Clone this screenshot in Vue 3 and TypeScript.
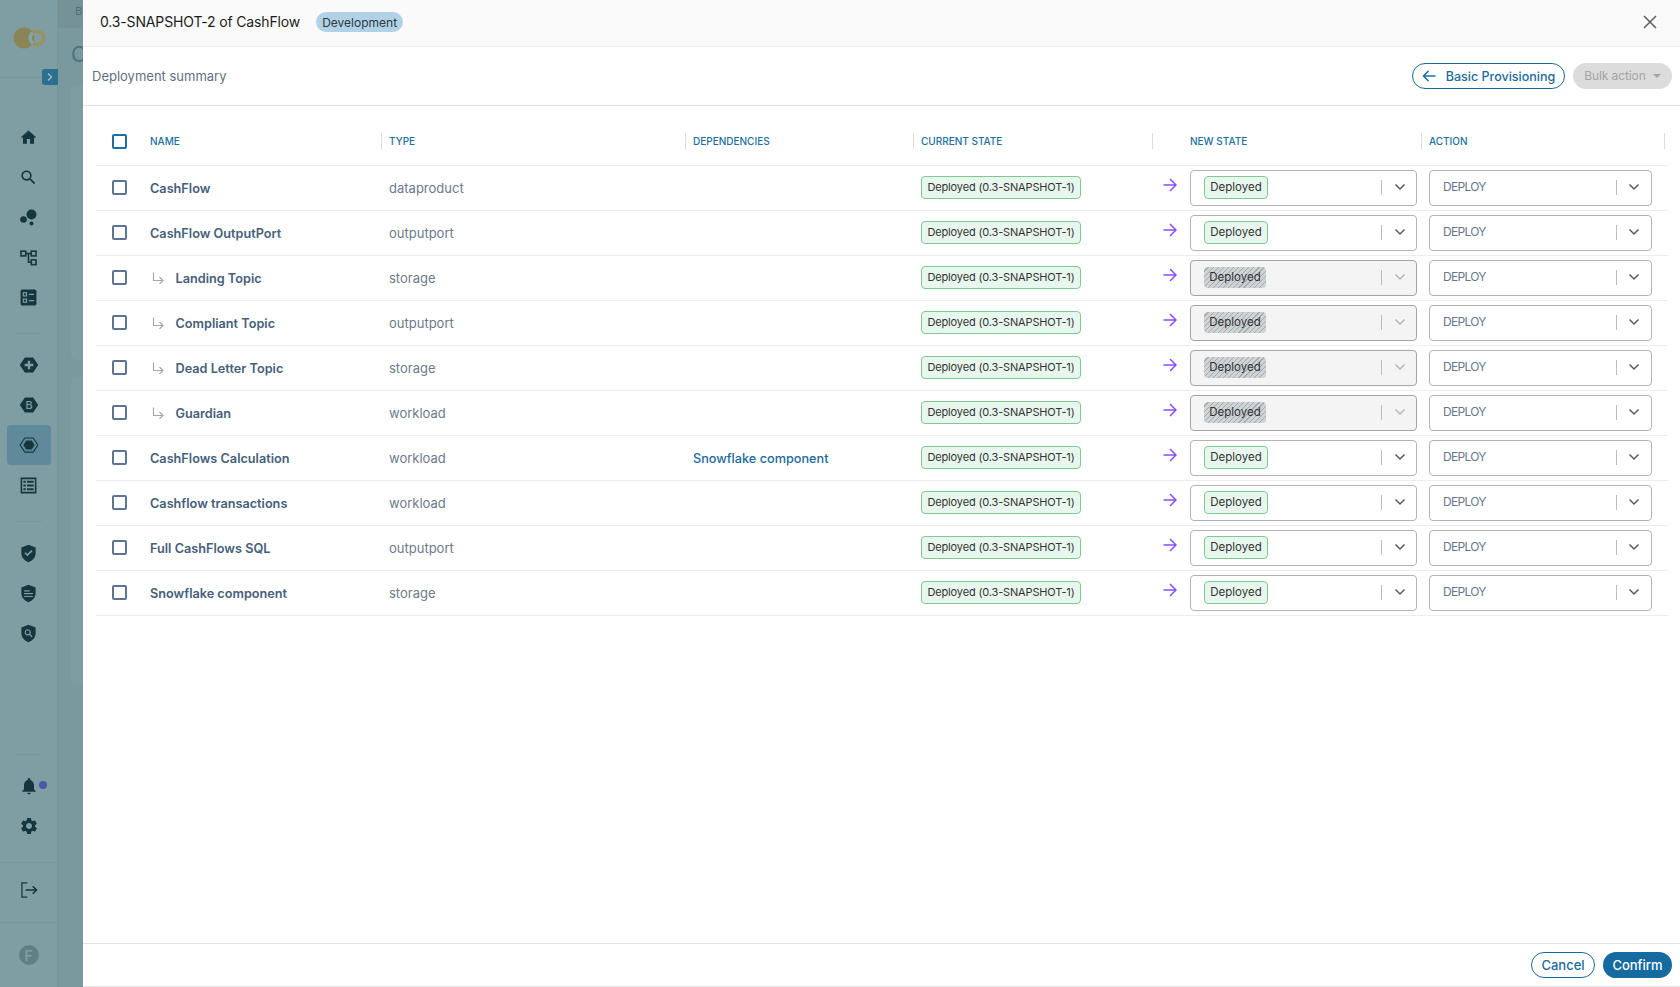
<script setup lang="ts">
interface Row { name: string; type: string; child?: boolean; dep?: string; locked?: boolean }
const rows: Row[] = [
  { name: 'CashFlow', type: 'dataproduct' },
  { name: 'CashFlow OutputPort', type: 'outputport' },
  { name: 'Landing Topic', type: 'storage', child: true, locked: true },
  { name: 'Compliant Topic', type: 'outputport', child: true, locked: true },
  { name: 'Dead Letter Topic', type: 'storage', child: true, locked: true },
  { name: 'Guardian', type: 'workload', child: true, locked: true },
  { name: 'CashFlows Calculation', type: 'workload', dep: 'Snowflake component' },
  { name: 'Cashflow transactions', type: 'workload' },
  { name: 'Full CashFlows SQL', type: 'outputport' },
  { name: 'Snowflake component', type: 'storage' },
]
const heads = ['NAME', 'TYPE', 'DEPENDENCIES', 'CURRENT STATE', '', 'NEW STATE', 'ACTION', '']
</script>

<template>
  <div class="page">
    <aside class="side">
      <div class="brand">
        <svg class="logo" viewBox="0 0 34 24" width="34" height="24">
          <defs><clipPath id="logo-clip"><circle cx="11" cy="12" r="10.500" /></clipPath></defs>
          <circle cx="11" cy="12" r="10.500" fill="#8b8456" />
          <circle cx="24" cy="12" r="6.800" fill="none" stroke="#9a9160" stroke-width="3.400" />
          <circle cx="24" cy="12" r="6.800" fill="none" stroke="#86a3a5" stroke-width="3.400" clip-path="url(#logo-clip)" />
        </svg>
        <span class="expand">
          <svg viewBox="0 0 16 16" width="16" height="16"><path d="M6 4.500 9.500 8 6 11.500" fill="none" stroke="#9cc0d0" stroke-width="1.300" /></svg>
        </span>
      </div>
      <nav class="group first">
        <a class="item"><svg viewBox="0 0 24 24" class="ic"><path d="M10 20v-6h4v6h5v-8h3L12 3 2 12h3v8z" /></svg></a>
        <a class="item"><svg viewBox="0 0 24 24" class="ic"><path d="M15.500 14h-.79l-.28-.27C15.410 12.590 16 11.110 16 9.500 16 5.910 13.090 3 9.500 3S3 5.910 3 9.500 5.910 16 9.500 16c1.610 0 3.090-.59 4.230-1.570l.27.28v.79l5 4.990L20.490 19l-4.990-5zm-6 0C7.010 14 5 11.990 5 9.500S7.010 5 9.500 5 14 7.010 14 9.500 11.990 14 9.500 14z" /></svg></a>
        <a class="item"><svg viewBox="0 0 24 24" class="ic"><circle cx="5.700" cy="14.500" r="4.200" /><circle cx="15.800" cy="8.200" r="6.300" /><circle cx="15.800" cy="19.600" r="2.500" /></svg></a>
        <a class="item"><svg viewBox="0 0 24 24" class="ic"><g fill="none" stroke="#16363d" stroke-width="2"><rect x="2.500" y="4" width="6" height="6" /><rect x="15.500" y="4" width="6" height="6" /><rect x="15.500" y="15" width="6" height="6" /><path d="M8.500 7h7M12 7v11h3.500" /></g></svg></a>
        <a class="item"><svg viewBox="0 0 24 24" class="ic"><rect x="2" y="2" width="20" height="20" rx="2" /><g fill="none" stroke="#7f9ea3" stroke-width="1.500"><rect x="5.500" y="6" width="4" height="4" /><rect x="5.500" y="14" width="4" height="4" /><path d="M12.500 8h6.500M12.500 16h6.500" /></g></svg></a>
      </nav>
      <div class="rule" />
      <nav class="group">
        <a class="item"><svg viewBox="0 0 24 24" class="ic big"><path fill-rule="evenodd" d="M7 3h10l6 9-6 9H7l-6-9zm3.600 3.800v3.800H6.800v2.800h3.800v3.800h2.800v-3.800h3.800v-2.800h-3.800V6.800z" /></svg></a>
        <a class="item"><svg viewBox="0 0 24 24" class="ic big"><path d="M7 3h10l6 9-6 9H7l-6-9z" /><text x="12" y="16.500" class="hex-b">B</text></svg></a>
        <a class="item active"><svg viewBox="0 0 24 24" class="ic big"><path d="M7 3.500h10l5.700 8.500L17 20.500H7L1.300 12z" fill="none" stroke="#16363d" stroke-width="1.300" /><path d="M8.700 6.500h6.600l3.400 5.500-3.400 5.500H8.700L5.300 12z" /></svg></a>
        <a class="item"><svg viewBox="0 0 24 24" class="ic"><path fill-rule="evenodd" d="M2 2h20v20H2zm2 2v16h16V4zm1.500 2h3v2.500h-3zm4.500 0h8.500v2.500H10zm-4.500 4.800h3v2.500h-3zm4.500 0h8.500v2.500H10zm-4.500 4.700h3V18h-3zm4.500 0h8.500V18H10z" /></svg></a>
      </nav>
      <div class="rule" />
      <nav class="group">
        <a class="item"><svg viewBox="0 0 24 24" class="ic"><path fill-rule="evenodd" d="M12 1 3 4.500v7c0 5.500 3.800 9.800 9 11.500 5.200-1.700 9-6 9-11.500v-7zm-1.400 14.500-3.800-3.800 1.500-1.400 2.300 2.300 5-5 1.500 1.400z" /></svg></a>
        <a class="item"><svg viewBox="0 0 24 24" class="ic"><path fill-rule="evenodd" d="M12 1 3 4.500v7c0 5.500 3.800 9.800 9 11.500 5.200-1.700 9-6 9-11.500v-7zM6.500 8h7v1.500h-7zm0 3.500h11V13h-11zm0 3.500h11v1.500h-11z" /></svg></a>
        <a class="item"><svg viewBox="0 0 24 24" class="ic"><path fill-rule="evenodd" d="M12 1 3 4.500v7c0 5.500 3.800 9.800 9 11.500 5.200-1.700 9-6 9-11.500v-7zm-1 5.500a4 4 0 0 1 3.200 6.400l3 3-1.100 1.100-3-3A4 4 0 1 1 11 6.500zm0 1.500a2.500 2.500 0 1 0 0 5 2.500 2.500 0 0 0 0-5z" /></svg></a>
      </nav>
      <div class="grow" />
      <div class="rule last" />
      <nav class="group">
        <a class="item bell">
          <svg viewBox="0 0 24 24" class="ic wide"><path d="M12 22c1.100 0 2-.9 2-2h-4c0 1.100.89 2 2 2zm6-6v-5c0-3.070-1.640-5.640-4.500-6.320V4c0-.83-.67-1.500-1.500-1.500s-1.500.67-1.500 1.500v.68C7.630 5.360 6 7.920 6 11v5l-2 2v1h16v-1l-2-2z" /></svg>
          <i class="dot" />
        </a>
        <a class="item"><svg viewBox="0 0 24 24" class="ic wide"><path d="M19.140 12.940c.04-.3.060-.61.060-.94 0-.32-.02-.64-.07-.94l2.030-1.580c.18-.14.230-.41.120-.61l-1.920-3.320c-.12-.22-.37-.29-.59-.22l-2.390.96c-.5-.38-1.030-.7-1.620-.94l-.36-2.540c-.04-.24-.24-.41-.48-.41h-3.840c-.24 0-.43.17-.47.41l-.36 2.540c-.59.24-1.130.57-1.620.94l-2.390-.96c-.22-.08-.47 0-.59.22L2.740 8.870c-.12.21-.08.47.12.61l2.030 1.580c-.05.3-.09.63-.09.94s.02.64.07.94l-2.030 1.580c-.18.14-.23.41-.12.61l1.920 3.320c.12.22.37.29.59.22l2.390-.96c.5.38 1.030.7 1.620.94l.36 2.54c.05.24.24.41.48.41h3.840c.24 0 .44-.17.47-.41l.36-2.540c.59-.24 1.130-.56 1.620-.94l2.390.96c.22.08.47 0 .59-.22l1.920-3.320c.12-.22.070-.47-.12-.61l-2.010-1.580zM12 15.600c-1.980 0-3.600-1.620-3.600-3.600s1.620-3.600 3.600-3.600 3.600 1.620 3.600 3.600-1.620 3.600-3.600 3.600z" /></svg></a>
      </nav>
      <div class="logout">
        <svg viewBox="0 0 24 24" class="line"><path d="M10 3.500H3.500v17H10" stroke-width="1.500" /><path d="M8 12h13M16.500 7.500 21 12l-4.500 4.500" /></svg>
      </div>
      <div class="user"><span class="avatar">F</span></div>
    </aside>

    <main class="back">
      <div class="crumb">Bu</div>
      <div class="back-title">C</div>
      <div class="back-card one" />
      <div class="back-card two" />
    </main>

    <section class="modal">
      <header class="mhead">
        <h1>0.3-SNAPSHOT-2 of CashFlow</h1>
        <span class="env">Development</span>
        <button class="close" aria-label="close">
          <svg viewBox="0 0 14 14" width="14" height="14"><path d="M1 1l12 12M13 1L1 13" fill="none" stroke="#5c5c5c" stroke-width="1.500" /></svg>
        </button>
      </header>

      <div class="bar">
        <span class="summary">Deployment summary</span>
        <div class="bar-actions">
          <button class="btn outline basic">
            <svg viewBox="0 0 14 14" width="14" height="14"><path d="M13.500 7H1.500M6.500 2 1.500 7l5 5" fill="none" stroke="#1f6fa3" stroke-width="1.600" /></svg>
            Basic Provisioning
          </button>
          <button class="btn bulk">Bulk action <i class="caret" /></button>
        </div>
      </div>

      <div class="table">
        <div class="row head">
          <span class="cell check"><i class="box primary" /></span>
          <span v-for="(h, i) in heads" :key="i" class="cell hcell" :class="{ 'no-rule': i === 0 || i === 5 }">{{ h }}</span>
        </div>
        <div v-for="r in rows" :key="r.name" class="row">
          <span class="cell check"><i class="box" /></span>
          <span class="cell name">
            <svg v-if="r.child" class="sub" viewBox="0 0 12 12" width="12" height="12"><path d="M1.500 0.500V8.500H11M7.500 5 11 8.500 7.500 12" fill="none" stroke="#a5a5a5" stroke-width="1.100" /></svg>
            {{ r.name }}
          </span>
          <span class="cell type">{{ r.type }}</span>
          <span class="cell dep">{{ r.dep }}</span>
          <span class="cell cur"><span class="tag">Deployed (0.3-SNAPSHOT-1)</span></span>
          <span class="cell arrow">
            <svg viewBox="0 0 14 14" width="14" height="14"><path d="M0.500 7H13M7 1l6 6-6 6" fill="none" stroke="#8a4dff" stroke-width="1.500" /></svg>
          </span>
          <span class="cell">
            <span class="select state" :class="{ locked: r.locked }">
              <span class="tag" :class="{ hatch: r.locked }">Deployed</span>
              <i class="sep" />
              <svg class="chev" viewBox="0 0 12 8" width="12" height="8"><path d="M1.500 1.500 6 6l4.500-4.500" fill="none" stroke-width="1.500" /></svg>
            </span>
          </span>
          <span class="cell act">
            <span class="select action">
              <span class="val">DEPLOY</span>
              <i class="sep" />
              <svg class="chev" viewBox="0 0 12 8" width="12" height="8"><path d="M1.500 1.500 6 6l4.500-4.500" fill="none" stroke-width="1.500" /></svg>
            </span>
          </span>
          <span class="cell" />
        </div>
      </div>

      <footer class="mfoot">
        <button class="btn outline cancel">Cancel</button>
        <button class="btn confirm">Confirm</button>
      </footer>
    </section>
  </div>
</template>

<style scoped>
.page {
  display: flex;
  height: 987px;
  overflow: hidden;
  font-family: Inter, "Noto Sans", sans-serif;
  background: #7a999e;
}
.side {
  width: 58px;
  flex: none;
  display: flex;
  flex-direction: column;
  background: #7f9ea3;
  border-right: 1px solid #779599;
  box-sizing: border-box;
}
.brand {
  height: 78px;
  flex: none;
  position: relative;
  border-bottom: 1px solid #769499;
  box-sizing: border-box;
  padding: 26px 0 0 12.500px;
}
.logo { display: block; }
.expand {
  position: absolute;
  right: -1px;
  top: 69px;
  width: 16px;
  height: 16px;
  border-radius: 3px 0 0 3px;
  background: #2c6f8e;
  z-index: 1;
}
.expand svg { display: block; }
.group { display: flex; flex-direction: column; align-items: center; }
.group.first { margin-top: 39px; }
.item {
  width: 44px;
  height: 40px;
  display: flex;
  align-items: center;
  justify-content: center;
  border-radius: 4px;
  position: relative;
}
.item.active { background: #5f8a9b; }
.ic { width: 19px; height: 19px; fill: #16363d; }
.ic.big { width: 20px; height: 20px; }
.ic.wide { width: 20px; height: 20px; }
.hex-b { font-size: 13px; font-weight: 500; text-anchor: middle; fill: #7f9ea3; font-family: Inter, sans-serif; }
.rule { height: 1px; width: 27px; margin: 16px 0 11px 15px; background: #769499; flex: none; }
.rule.last { margin-top: 0; }
.grow { flex: 1; }
.dot {
  position: absolute;
  left: 32px;
  top: 15px;
  width: 8px;
  height: 8px;
  border-radius: 50%;
  background: #4f55a8;
}
.logout {
  height: 61px;
  flex: none;
  margin-top: 16px;
  padding-bottom: 5px;
  border-top: 1px solid #769499;
  border-bottom: 1px solid #769499;
  box-sizing: border-box;
  display: flex;
  align-items: center;
  justify-content: center;
}
.line { width: 20px; height: 20px; fill: none; stroke: #16363d; stroke-width: 2; }
.user { height: 64px; flex: none; display: flex; align-items: center; justify-content: center; }
.avatar {
  width: 20px;
  height: 20px;
  border-radius: 50%;
  background: #5f7f85;
  color: #7f9ea3;
  font-size: 14px;
  font-weight: 600;
  display: flex;
  align-items: center;
  justify-content: center;
}
.back { flex: 1; padding-left: 13px; position: relative; color: #4d7179; }
.crumb { margin-left: -13px; padding: 4px 0 0 17px; height: 28px; box-sizing: border-box; background: #759397; font-size: 11px; }
.back-title { font-size: 21px; margin-top: 14px; height: 43px; }
.back-card { background: #7e9da2; border-radius: 6px; }
.back-card.one { height: 275px; }
.back-card.two { height: 308px; margin-top: 17px; }

.modal {
  position: fixed;
  left: 83px;
  top: 0;
  right: 0;
  height: 987px;
  box-sizing: border-box;
  background: #fff;
  display: flex;
  flex-direction: column;
  border-bottom: 1px solid #e3e3e3;
}
.mhead {
  height: 47px;
  flex: none;
  box-sizing: border-box;
  background: #fafafa;
  border-bottom: 1px solid #ececec;
  display: flex;
  align-items: center;
  padding: 0 23px 4px 17px;
}
h1 { margin: 0; font-size: 14px; font-weight: 400; color: #1c1c1c; letter-spacing: -.15px; }
.env {
  margin-left: 16px;
  height: 20px;
  width: 87px;
  border-radius: 10px;
  background: #b1d2e6;
  font-size: 12px;
  color: #2c3a42;
  display: flex;
  align-items: center;
  justify-content: center;
  margin-top: 2px;
}
.close { margin-left: auto; margin-top: 2px; background: none; border: 0; padding: 0; display: flex; }
.bar {
  height: 59px;
  flex: none;
  box-sizing: border-box;
  border-bottom: 1px solid #e2e2e2;
  display: flex;
  align-items: center;
  justify-content: space-between;
  padding: 0 8px 0 9px;
}
.summary { font-size: 13px; color: #5f6f82; margin-top: -1px; }
.bar-actions { display: flex; gap: 8px; }
.btn {
  height: 26px;
  box-sizing: border-box;
  border-radius: 13px;
  border: 0;
  font-family: inherit;
  font-size: 13px;
  display: inline-flex;
  align-items: center;
  justify-content: center;
  padding: 0;
}
.btn.outline { border: 1px solid #1a6a9e; background: #fff; color: #1a6a9e; font-weight: 500; }
.basic.btn { width: 153px; gap: 10px; font-size: 12.500px; }
.bulk { width: 99px; background: #dcdcdc; color: #a4a4a4; font-size: 12px; gap: 7px; letter-spacing: -.1px; padding: 0 0 2px 0; }
.caret { width: 0; height: 0; border: 4px solid transparent; border-top-color: #a4a4a4; border-bottom-width: 0; margin-top: 2px; }

.table { padding-left: 13px; width: 1585px; box-sizing: border-box; }
.row {
  display: grid;
  grid-template-columns: 47px 238px 304px 228px 239px 31px 238px 243px 4px;
  height: 45px;
  box-sizing: border-box;
  border-bottom: 1px solid #ececec;
  align-items: center;
}
.row.head { height: 60px; padding-top: 11px; }
.cell { display: flex; align-items: center; padding-left: 7px; box-sizing: border-box; min-width: 0; }
.check { padding-left: 16px; }
.box {
  width: 15px;
  height: 15px;
  box-sizing: border-box;
  border: 2px solid #5b7592;
  border-radius: 2px;
  display: block;
  margin-top: -2px;
}
.box.primary { border-color: #1a6fa5; margin-top: 0; }
.hcell {
  height: 16px;
  font-size: 10px;
  font-weight: 500;
  color: #1b6fa3;
  border-left: 1px solid #dcdcdc;
}
.hcell.no-rule { border-left: 0; }
.name { font-size: 12.700px; font-weight: 600; color: #46607c; white-space: nowrap; }
.sub { margin: 0 11.500px 0 2px; }
.type { font-size: 13px; color: #6c7a8b; padding-left: 8px; }
.dep { font-size: 12.700px; font-weight: 500; color: #1a6a9e; padding-left: 8px; white-space: nowrap; }
.tag {
  height: 23px;
  box-sizing: border-box;
  padding: 0 6px;
  border: 1px solid #7fca90;
  border-radius: 4px;
  background: #e8f7ee;
  font-size: 11.500px;
  color: #333;
  display: inline-flex;
  align-items: center;
  white-space: nowrap;
  margin-top: -2px;
}
.cur { padding-left: 8px; }
.cur .tag { width: 160px; justify-content: center; padding: 0; font-size: 11px; letter-spacing: -.15px; }
.arrow { padding-left: 11px; }
.arrow svg { margin-top: -6px; }
.act { padding-left: 8px; }
.select {
  height: 36px;
  box-sizing: border-box;
  border: 1px solid #b3b3b3;
  border-radius: 4px;
  display: flex;
  align-items: center;
  background: #fff;
  position: relative;
}
.state { width: 227px; padding-left: 13px; }
.action { width: 223px; padding-left: 13px; }
.state .tag { width: 64px; padding: 0 0 2px; justify-content: center; margin-top: -1px; }
.state .tag.hatch {
  width: 62px;
  border: 0;
  background: repeating-linear-gradient(135deg, #ced3d6 0, #ced3d6 2.800px, #a6abb0 2.800px, #a6abb0 3.600px);
  height: 21px;
}
.locked { background: #f4f4f4; border-color: #a5a5a5; }
.val { font-size: 12px; letter-spacing: -.7px; color: #66778c; margin-top: -3px; }
.sep { position: absolute; top: 9px; width: 1px; height: 15px; background: #bdbdbd; }
.state .sep { left: 190px; }
.action .sep { left: 186px; }
.chev { position: absolute; top: 11.500px; stroke: #5a5a5a; }
.state .chev { left: 203px; }
.action .chev { left: 198px; }
.locked .chev { stroke: #b5b5b5; }

.mfoot {
  margin-top: auto;
  height: 43px;
  flex: none;
  box-sizing: border-box;
  border-top: 1px solid #e3e3e3;
  display: flex;
  justify-content: flex-end;
  gap: 8px;
  padding: 8px 8px 0 0;
}
.cancel { width: 64px; }
.confirm { width: 69px; background: #156a9f; color: #fff; font-weight: 500; }
</style>
